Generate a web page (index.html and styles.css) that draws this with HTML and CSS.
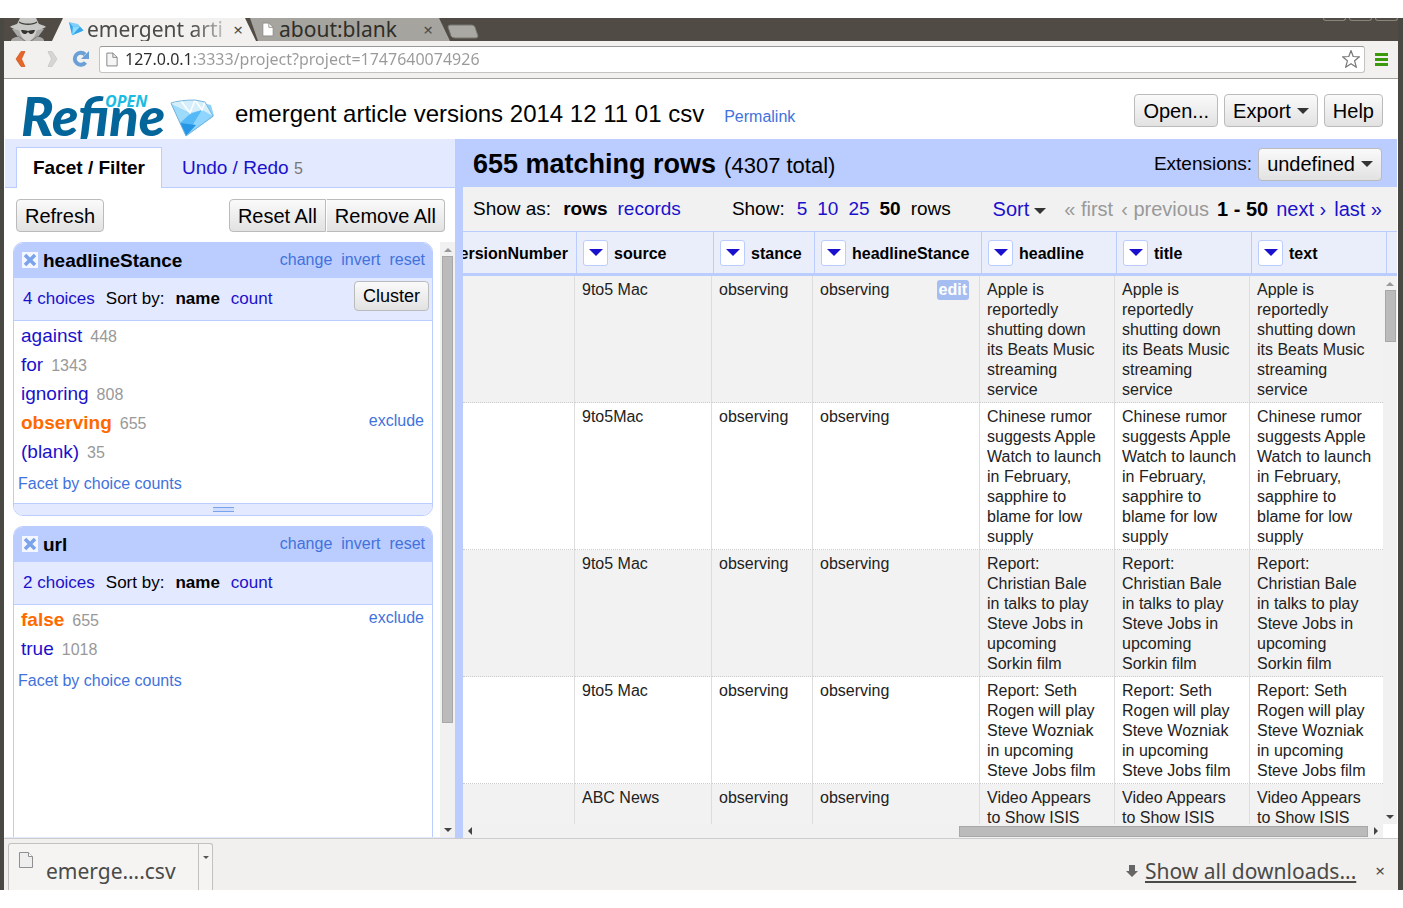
FILE: index.html
```html
<!DOCTYPE html>
<html lang="en">
<head>
<meta charset="utf-8">
<title>emergent article versions 2014 12 11 01 csv - OpenRefine</title>
<link rel="stylesheet" href="styles.css">
</head>
<body>
<div class="window">
  <div class="tabstrip">
    <svg class="incognito" viewBox="0 0 38 23" aria-hidden="true">
      <path d="M2 23c0-2 3-4 7-4l-3-4-3-4h32l-3 4-3 4c4 0 6 2 6 4z" fill="#a9a9a7"/>
      <path d="M10 10c1 8 5 13 9 13s8-5 9-13z" fill="#d0d0ce"/>
      <path d="M1 9c5 3 12 4 18 4s13-1 18-4c-2-2-5-2-7-3l-3-6H11L8 6C6 7 3 7 1 9z" fill="#c8c8c6"/>
      <path d="M10 4c4 3 14 3 18 0" fill="none" stroke="#45433e" stroke-width="1.500"/>
      <path d="M12 12c3 0 5 0 7 1 2-1 4-1 7-1-1 5-5 5-7 2-2 3-6 3-7-2z" fill="#34332f"/>
      <path d="M9 18l7 5M29 18l-7 5" stroke="#7c7b78" stroke-width="1"/>
    </svg>
    <div class="tab tab-active">
      <svg class="tab-gem" viewBox="0 0 44 36" aria-hidden="true"><path d="M2 2L26 3 43 17 16 34z" fill="#7fd0fb"/><path d="M2 2l12 10 18-3 11 8L16 34z" fill="#37a5ea"/><path d="M14 12l18-3-16 25z" fill="#8bdcff"/></svg>
      <span class="tab-title tab-fade">emergent arti</span>
      <button class="x-button" aria-label="Close tab">×</button>
    </div>
    <div class="tab tab-back">
      <svg class="doc-small" viewBox="0 0 14 17" aria-hidden="true"><path d="M1 1h7l5 5v10H1z" fill="#fff" stroke="#8a8984"/><path d="M8 1v5h5" fill="none" stroke="#8a8984"/></svg>
      <span class="tab-title">about:blank</span>
      <button class="x-button" aria-label="Close tab">×</button>
    </div>
    <button class="new-tab" aria-label="New tab"><svg viewBox="0 0 32 15"><path d="M3 1h22q2 0 3 2l3 9q0 2-2 2H8q-3 0-4-2L1 3q0-2 2-2z" fill="#a9a8a3" stroke="#77756f"/></svg></button>
    <div class="window-controls"><i></i><i></i><i></i></div>
  </div>

  <div class="toolbar">
    <button class="nav" aria-label="Back"><svg viewBox="0 0 20 20"><path d="M14 2.500h-4L5 10l5 7.500h4L10.500 10z" fill="#e8662c" stroke="#c95319" stroke-width=".7"/></svg></button>
    <button class="nav nav-forward" aria-label="Forward"><svg viewBox="0 0 20 20"><path d="M7 2.500h4l5 7.500-5 7.500H7l3.500-7.500z" fill="#d6d5d3" stroke="#c4c3c1" stroke-width=".7"/></svg></button>
    <button class="nav" aria-label="Reload"><svg viewBox="0 0 20 20"><path d="M14.500 13.500A6 6 0 1 1 14 5.500" fill="none" stroke="#6b9fd6" stroke-width="4"/><path d="M18 2v8h-8z" fill="#6b9fd6"/></svg></button>
    <div class="address">
      <svg class="doc-small" viewBox="0 0 14 17" aria-hidden="true"><path d="M1 1h7l5 5v10H1z" fill="#f5f5f5" stroke="#777"/><path d="M8 1v5h5" fill="none" stroke="#777"/></svg>
      <input class="address-input" aria-label="Address" value="127.0.0.1:3333/project?project=1747640074926">
      <svg class="star" viewBox="0 0 20 20" aria-hidden="true"><path d="M10 1.500l2.200 6 6.300.3-4.900 4 1.800 6.500L10 14.700l-5.400 3.600 1.800-6.500-4.900-4 6.300-.3z" fill="#fff" stroke="#777" stroke-width="1.200" stroke-linejoin="round"/></svg>
    </div>
    <button class="menu" aria-label="Menu"><i></i><i></i><i></i></button>
  </div>

  <div class="page">
    <header class="header">
      <svg class="logo" viewBox="0 0 196 46" role="img" aria-label="OpenRefine">
        <text x="0" y="43" class="logo-refine">Refine</text>
        <text x="84" y="14" class="logo-open">OPEN</text>
        <path d="M150 11l22-3 18 4 3 11-28 20-6-13z" fill="#8dd2fb"/>
        <path d="M150 11l10-3 14-1 10 2 8 14-11-6-12 3-19-9z" fill="#d5eefc"/>
        <path d="M150 11l19 10-10 9z" fill="#9edafa"/>
        <path d="M159 30l10-9 12-4-16 26z" fill="#55b9f8"/>
        <path d="M181 17l11 7-27 19z" fill="#8fd5ff"/>
        <path d="M159 30l16 2-10 11z" fill="#2595e6"/>
        <path d="M160 8l9 12 5-13 7 10 3-8" fill="none" stroke="#fff" stroke-width="1.500"/>
        <path d="M150 10q9-3 24-3l10 2 8 14-27 20-6-13z" fill="none" stroke="#77b6dd" stroke-width="1"/>
      </svg>
      <h1 class="project-name">emergent article versions 2014 12 11 01 csv</h1>
      <a class="light-link permalink" href="#">Permalink</a>
      <div class="header-actions">
        <button class="button">Open...</button>
        <button class="button">Export<span class="caret"></span></button>
        <button class="button">Help</button>
      </div>
    </header>

    <div class="main">
      <aside class="left">
        <nav class="left-tabs">
          <a class="left-tab left-tab-active" href="#">Facet / Filter</a>
          <a class="left-tab" href="#">Undo / Redo <span class="undo-count">5</span></a>
        </nav>
        <div class="facet-actions">
          <button class="button">Refresh</button>
          <div class="button-pair"><button class="button">Reset All</button><button class="button">Remove All</button></div>
        </div>
        <div class="facet-area">
          <div class="facets">
            <section class="facet">
              <div class="facet-head">
                <button class="facet-close" aria-label="Remove facet"><svg viewBox="0 0 16 16"><path d="M0 0h16v16H0z" fill="#f4f7ff"/><path d="M3 3l10 10M13 3L3 13" stroke="#7ba3ec" stroke-width="3.500"/></svg></button>
                <h2>headlineStance</h2>
                <div class="facet-links"><a class="light-link" href="#">change</a><a class="light-link" href="#">invert</a><a class="light-link" href="#">reset</a></div>
              </div>
              <div class="facet-sort"><a href="#">4 choices</a><span>Sort by:</span><b>name</b><a href="#">count</a><button class="button button-small">Cluster</button></div>
              <div class="facet-body">
                <div class="choice"><a href="#">against</a><span>448</span></div>
                <div class="choice"><a href="#">for</a><span>1343</span></div>
                <div class="choice"><a href="#">ignoring</a><span>808</span></div>
                <div class="choice choice-on"><a href="#">observing</a><span>655</span><a class="light-link exclude" href="#">exclude</a></div>
                <div class="choice"><a href="#">(blank)</a><span>35</span></div>
                <a class="light-link by-counts" href="#">Facet by choice counts</a>
              </div>
              <div class="resizer"><i></i></div>
            </section>
            <section class="facet facet-last">
              <div class="facet-head">
                <button class="facet-close" aria-label="Remove facet"><svg viewBox="0 0 16 16"><path d="M0 0h16v16H0z" fill="#f4f7ff"/><path d="M3 3l10 10M13 3L3 13" stroke="#7ba3ec" stroke-width="3.500"/></svg></button>
                <h2>url</h2>
                <div class="facet-links"><a class="light-link" href="#">change</a><a class="light-link" href="#">invert</a><a class="light-link" href="#">reset</a></div>
              </div>
              <div class="facet-sort"><a href="#">2 choices</a><span>Sort by:</span><b>name</b><a href="#">count</a></div>
              <div class="facet-body">
                <div class="choice choice-on"><a href="#">false</a><span>655</span><a class="light-link exclude" href="#">exclude</a></div>
                <div class="choice"><a href="#">true</a><span>1018</span></div>
                <a class="light-link by-counts" href="#">Facet by choice counts</a>
              </div>
            </section>
          </div>
          <div class="vbar"><i class="arrow-up"></i><div class="thumb facet-thumb"></div><i class="arrow-down"></i></div>
        </div>
      </aside>

      <section class="right">
        <div class="summary">
          <h2>655 matching rows</h2><span class="total">(4307 total)</span>
          <span class="extensions">Extensions:</span><button class="button">undefined<span class="caret"></span></button>
        </div>
        <div class="controls">
          <div class="group"><span class="group-label">Show as:</span><b>rows</b><a href="#">records</a></div>
          <div class="group group-size"><span class="group-label">Show:</span><a href="#">5</a><a href="#">10</a><a href="#">25</a><b>50</b><span>rows</span></div>
          <div class="pager"><a class="sort" href="#">Sort<span class="caret"></span></a><span class="off">« first</span><span class="off">‹ previous</span><b>1 - 50</b><a href="#">next ›</a><a class="last" href="#">last »</a></div>
        </div>
        <table class="grid grid-head">
          <colgroup><col><col class="c-source"><col class="c-stance"><col class="c-hstance"><col class="c-text"><col class="c-text"><col class="c-text"><col class="c-end"></colgroup>
          <tr>
            <th><div class="clipped"><span>articleVersionNumber</span></div></th>
            <th><div class="head"><button class="drop" aria-label="source menu"><i></i></button><span>source</span></div></th>
            <th><div class="head"><button class="drop" aria-label="stance menu"><i></i></button><span>stance</span></div></th>
            <th><div class="head"><button class="drop" aria-label="headlineStance menu"><i></i></button><span>headlineStance</span></div></th>
            <th><div class="head"><button class="drop" aria-label="headline menu"><i></i></button><span>headline</span></div></th>
            <th><div class="head"><button class="drop" aria-label="title menu"><i></i></button><span>title</span></div></th>
            <th><div class="head"><button class="drop" aria-label="text menu"><i></i></button><span>text</span></div></th>
            <td></td>
          </tr>
        </table>
        <div class="data-row">
          <div class="data">
            <table class="grid grid-body">
              <colgroup><col><col class="c-source"><col class="c-stance"><col class="c-hstance"><col class="c-text"><col class="c-text"><col class="c-text-last"></colgroup>
              <tr><td></td><td>9to5 Mac</td><td>observing</td><td><div class="editable">observing<button class="edit">edit</button></div></td><td>Apple is reportedly shutting down its Beats Music streaming service</td><td>Apple is reportedly shutting down its Beats Music streaming service</td><td>Apple is reportedly shutting down its Beats Music streaming service</td></tr>
              <tr><td></td><td>9to5Mac</td><td>observing</td><td>observing</td><td>Chinese rumor suggests Apple Watch to launch in February, sapphire to blame for low supply</td><td>Chinese rumor suggests Apple Watch to launch in February, sapphire to blame for low supply</td><td>Chinese rumor suggests Apple Watch to launch in February, sapphire to blame for low supply</td></tr>
              <tr><td></td><td>9to5 Mac</td><td>observing</td><td>observing</td><td>Report: Christian Bale in talks to play Steve Jobs in upcoming Sorkin film</td><td>Report: Christian Bale in talks to play Steve Jobs in upcoming Sorkin film</td><td>Report: Christian Bale in talks to play Steve Jobs in upcoming Sorkin film</td></tr>
              <tr><td></td><td>9to5 Mac</td><td>observing</td><td>observing</td><td>Report: Seth Rogen will play Steve Wozniak in upcoming Steve Jobs film</td><td>Report: Seth Rogen will play Steve Wozniak in upcoming Steve Jobs film</td><td>Report: Seth Rogen will play Steve Wozniak in upcoming Steve Jobs film</td></tr>
              <tr><td></td><td>ABC News</td><td>observing</td><td>observing</td><td>Video Appears to Show ISIS</td><td>Video Appears to Show ISIS</td><td>Video Appears to Show ISIS</td></tr>
            </table>
          </div>
          <div class="vbar"><i class="arrow-up"></i><div class="thumb data-thumb"></div><i class="arrow-down"></i></div>
        </div>
        <div class="hbar"><i class="arrow-left"></i><div class="htrack"><div class="hthumb"></div></div><i class="arrow-right"></i></div>
      </section>
    </div>
  </div>

  <footer class="downloads">
    <div class="download">
      <button class="download-file"><svg class="download-icon" viewBox="0 0 14 16" aria-hidden="true"><path d="M.5.500h9l4 4v11H.5z" fill="#eee" stroke="#8f8f8f"/><path d="M9.500.500v4h4" fill="#fff" stroke="#8f8f8f"/></svg><span>emerge….csv</span></button>
      <button class="download-menu" aria-label="Download options"><i></i></button>
    </div>
    <svg class="down-icon" viewBox="0 0 12 12" aria-hidden="true"><path d="M3 0h6v6h3l-6 6-6-6h3z" fill="#666"/></svg>
    <a class="show-all" href="#">Show all downloads...</a>
    <button class="x-button x-downloads" aria-label="Close downloads bar">×</button>
  </footer>
</div>
</body>
</html>
```

FILE: styles.css
```css
* { box-sizing: border-box; }

body {
  margin: 0;
  padding: 18px 0;
  height: 100vh;
  background: #fff;
  color: #000;
  font: 16px/20px "Liberation Sans", Arial, sans-serif;
}

button { font: inherit; color: inherit; cursor: pointer; }
a { color: #1a11cc; text-decoration: none; }
h1, h2 { margin: 0; }
i { display: block; }
svg { display: block; }

.window {
  display: flex;
  flex-direction: column;
  height: 100%;
  overflow: hidden;
  background: #504c45;
  border: solid #4a4842;
  border-width: 0 5px 0 4px;
}

/* Browser chrome */
.tabstrip {
  display: flex;
  flex: none;
  height: 23px;
  padding-left: 5px;
  color: #4a4a48;
  font-family: "Noto Sans", "Open Sans", sans-serif;
}
.incognito { width: 38px; height: 23px; }
.tab {
  display: flex;
  align-items: center;
  height: 23px;
  clip-path: polygon(11px 0, calc(100% - 11px) 0, 100% 100%, 0 100%);
}
.tab-active { z-index: 1; width: 204px; margin-left: 5px; padding: 0 10px 0 15px; gap: 3px; background: #f2f1f0; }
.tab-back {
  width: 200px;
  margin-left: -6px;
  padding: 0 14px 0 12px;
  gap: 5px;
  background: #a5a49f;
  color: #2f2e28;
  clip-path: polygon(0 0, calc(100% - 11px) 0, 100% 100%, 8px 100%);
}
.tab-gem { flex: none; width: 17px; height: 17px; transform: rotate(10deg); }
.tab-title { flex: 1; font-size: 21px; line-height: 23px; white-space: nowrap; }
.tab-fade { mask-image: linear-gradient(to right, #000 75%, rgb(0 0 0 / 20%)); }
.doc-small { flex: none; width: 12px; height: 15px; }
.x-button { padding: 0 3px; border: 0; background: none; font: 17px/20px "Noto Sans", sans-serif; color: #4a4a48; }
.new-tab { width: 32px; height: 23px; margin-left: -3px; padding: 3px 0 0; border: 0; background: none; }
.new-tab svg { width: 32px; height: 15px; }
.window-controls { display: flex; gap: 3px; margin-left: auto; }
.window-controls i { width: 23px; height: 3px; border: 1px solid #88857c; border-top: 0; border-radius: 0 0 3px 3px; }

.toolbar {
  display: flex;
  flex: none;
  align-items: center;
  gap: 10px;
  height: 38px;
  padding: 0 10px 1px 7px;
  background: #f2f1f0;
  border-bottom: 1px solid #a3a29f;
}
.nav { width: 20px; height: 20px; padding: 0; border: 0; background: none; }
.nav svg { width: 20px; height: 20px; }
.address {
  display: flex;
  flex: 1;
  align-items: center;
  gap: 7px;
  height: 27px;
  margin-left: -2px;
  padding: 0 3px 0 6px;
  background: #fff;
  border: 1px solid #c4c3c1;
  border-top-color: #999;
  border-radius: 3px;
}
.address-input {
  flex: 1;
  min-width: 0;
  padding: 0;
  border: 0;
  outline: 0;
  font: 16px/24px "Noto Sans", "Open Sans", sans-serif;
  color: transparent;
  background: linear-gradient(to right, #2a2a2a 67px, #999 67px) text;
}
.star { flex: none; width: 20px; height: 20px; }
.menu { display: grid; gap: 2px; width: 13px; padding: 0; border: 0; background: none; }
.menu i { height: 3px; background: #3a9a0c; }

/* Page frame */
.page { display: flex; flex: 1; flex-direction: column; min-height: 0; padding: 0 1px; background: #fff; }
.header { display: flex; flex: none; align-items: center; height: 60px; padding: 3px 14px 0 16px; }
.logo { flex: none; align-self: flex-end; width: 196px; height: 46px; margin-right: 18px; overflow: visible; }
.logo-refine { font: italic 900 54px "Lato", sans-serif; fill: #04659a; }
.logo-open { font: italic 700 16px "Noto Sans", sans-serif; fill: #1bbce2; }
.project-name { margin-top: 6px; font-size: 24px; font-weight: 400; line-height: 28px; white-space: nowrap; }
.permalink { margin: 12px 0 0 20px; }
.light-link { color: #4272db; }
.header-actions { display: flex; gap: 6px; margin-left: auto; }

.button {
  display: inline-flex;
  align-items: center;
  height: 33px;
  padding: 0 8px;
  color: #000;
  font-size: 20px;
  line-height: 24px;
  white-space: nowrap;
  background: linear-gradient(#fafafa, #e2e2e2);
  border: 1px solid #bbb;
  border-radius: 4px;
}
.button-small { height: 30px; font-size: 18px; }
.button-pair { display: flex; }
.button-pair .button:first-child { border-radius: 4px 0 0 4px; }
.button-pair .button:last-child { border-left-color: #fff; border-radius: 0 4px 4px 0; }
.caret { display: inline-block; margin-left: 6px; border: 6px solid transparent; border-top-color: #333; border-bottom: 0; }

.main { display: flex; flex: 1; min-height: 0; }

/* Facet column */
.left { display: flex; flex: none; flex-direction: column; width: 450px; border-bottom: 1px solid #e3e9ff; }
.left-tabs {
  display: flex;
  flex: none;
  align-items: flex-end;
  gap: 4px;
  height: 49px;
  padding-left: 11px;
  background: #e3e9ff;
  border-bottom: 1px solid #bbccff;
}
.left-tab { height: 39px; padding: 0 16px; font-size: 19px; line-height: 40px; }
.left-tab-active { height: 41px; margin-bottom: -1px; color: #000; font-weight: 700; background: #fff; border: 1px solid #bbccff; border-bottom: 0; }
.undo-count { color: #777; font-size: 16px; }
.facet-actions { display: flex; flex: none; justify-content: space-between; padding: 11px 10px 10px 11px; }
.facet-area { display: flex; flex: 1; min-height: 0; padding-left: 8px; }
.facets { display: flex; flex: 1; flex-direction: column; gap: 10px; overflow: hidden; padding-right: 7px; }
.facet { flex: none; border: 1px solid #bbccff; border-radius: 10px; overflow: hidden; }
.facet-last { flex: 1 0 auto; border-bottom: 0; border-radius: 10px 10px 0 0; }
.facet-head { display: flex; align-items: center; height: 35px; padding: 0 7px 2px 8px; background: #bbccff; }
.facet-head h2 { margin: 3px 0 0 5px; font-size: 19px; line-height: 24px; }
.facet-close { width: 16px; height: 16px; padding: 0; border: 0; background: none; }
.facet-close svg { width: 16px; height: 16px; }
.facet-links { display: flex; gap: 9px; margin-left: auto; }
.facet-sort {
  display: flex;
  align-items: center;
  gap: 11px;
  height: 43px;
  padding: 0 3px 0 9px;
  font-size: 17px;
  background: #e3e9ff;
  border-bottom: 1px solid #bbccff;
}
.facet-sort .button { margin: 0 0 6px auto; }
.facet-body { padding: 0 8px 6px 4px; }
.choice { display: flex; align-items: center; gap: 8px; height: 29px; padding-left: 3px; font-size: 19px; }
.choice span { margin-top: 2px; color: #999; font-size: 16px; }
.choice-on a:first-child { color: #ff6a00; font-weight: 700; }
.choice .exclude { margin: 0 0 3px auto; font-size: 16px; }
.by-counts { display: block; margin-top: 5px; line-height: 26px; }
.resizer { display: grid; place-items: center; height: 12px; background: #e3e9ff; border-top: 1px solid #bbccff; }
.resizer i { width: 21px; height: 5px; border: solid #7ba3ec; border-width: 1px 0; background: #cddcff; }

/* Scroll bars */
.vbar { display: flex; flex: none; flex-direction: column; align-items: center; width: 15px; padding: 6px 0 5px; background: #f1f1f1; }
.thumb { width: 11px; margin-top: 4px; background: #bbb; border: 1px solid #a8a8a8; }
.facet-thumb { height: 80%; }
.data-thumb { height: 52px; }
.arrow-up { border: 4px solid transparent; border-top: 0; border-bottom-color: #999; }
.arrow-down { margin-top: auto; border: 4px solid transparent; border-bottom: 0; border-top-color: #444; }
.hbar { display: flex; flex: none; align-items: center; height: 14px; margin-right: 14px; padding: 0 5px; background: #f1f1f1; }
.htrack { flex: 1; margin: 0 6px; }
.hthumb { width: 46%; height: 11px; margin-left: auto; background: #bbb; border: 1px solid #a8a8a8; }
.arrow-left { border: 4px solid transparent; border-left: 0; border-right-color: #444; }
.arrow-right { border: 4px solid transparent; border-right: 0; border-left-color: #444; }

/* Data column */
.right { display: flex; flex: 1; flex-direction: column; min-width: 0; border-left: 8px solid #bbccff; }
.summary { display: flex; flex: none; align-items: center; height: 48px; padding: 2px 15px 0 10px; background: #bbccff; white-space: nowrap; }
.summary h2 { font-size: 27px; line-height: 32px; }
.total { margin: 4px 0 0 8px; font-size: 22px; }
.extensions { margin: 0 6px 0 auto; font-size: 19px; }
.controls { display: flex; flex: none; align-items: center; gap: 20px; height: 44px; padding: 0 15px 0 10px; font-size: 19px; background: #f1f1f1; white-space: nowrap; }
.group, .pager { display: flex; align-items: center; gap: 10px; }
.group-size { margin-left: 31px; }
.group-label { margin-right: 2px; }
.pager { gap: 8px; margin-left: auto; font-size: 20px; }
.sort { margin-right: 10px; }
.sort .caret { margin-left: 5px; vertical-align: middle; }
.off { color: #999; }

.grid { width: 100%; table-layout: fixed; border-collapse: separate; border-spacing: 0; }
.c-source { width: 137px; }
.c-stance { width: 101px; }
.c-hstance { width: 167px; }
.c-text { width: 135px; }
.c-text-last { width: 133px; }
.c-end { width: 10px; }
.grid-head { flex: none; border-top: 1px solid #bbccff; border-bottom: 3px solid #bbccff; background: #eaedfa; }
.grid-head th { height: 41px; padding: 0; border-right: 1px solid #bbccff; }
.head { display: flex; align-items: center; gap: 6px; padding-left: 6px; white-space: nowrap; }
.head span, .clipped span { padding-top: 2px; }
.clipped { display: flex; justify-content: flex-end; overflow: hidden; padding-right: 8px; }
.drop { display: grid; place-items: center; width: 25px; height: 26px; padding: 0; background: #fff; border: 1px solid #bbccff; border-radius: 3px; }
.drop i { border: 7px solid transparent; border-top-color: #1a11cc; border-bottom: 0; }
.data-row { display: flex; flex: 1; min-height: 0; }
.data { flex: 1; min-width: 0; overflow: hidden; }
.data-row .vbar { width: 14px; }
.grid-body td { padding: 4px 10px 2px 7px; color: #222; vertical-align: top; border-right: 1px solid #ddd; border-bottom: 1px dotted #ccc; }
.grid-body td:nth-child(n+5) { padding-right: 12px; }
.grid-body td:last-child { padding-right: 11px; border-right: 0; }
.grid-body tr:nth-child(odd) { background: #f2f2f2; }
.editable { display: flex; justify-content: space-between; }
.edit { height: 20px; padding: 0 2px; border: 0; border-radius: 3px; background: #a5bdf0; color: #fff; font-weight: 700; line-height: 20px; }

/* Downloads bar */
.downloads { display: flex; flex: none; align-items: center; height: 52px; padding: 0 10px 0 4px; background: #f1f0ee; border-top: 1px solid #ccc; color: #4a4a48; font: 21px/28px "Noto Sans", "Open Sans", sans-serif; }
.download { display: flex; align-self: stretch; margin: 4px auto 0 0; border: 1px solid #c2c1bf; border-bottom: 0; border-radius: 3px 3px 0 0; background: #f5f4f3; }
.download-file { display: flex; gap: 13px; padding: 8px 22px 0 10px; border: 0; background: none; }
.download-file span { padding-top: 5px; }
.download-icon { width: 14px; height: 16px; }
.download-menu { width: 14px; padding: 0 4px 20px; border: 0; border-left: 1px solid #c2c1bf; background: none; }
.download-menu i { border: 3px solid transparent; border-top-color: #555; border-bottom: 0; }
.down-icon { width: 12px; height: 12px; margin: 12px 7px 0 0; }
.show-all { margin: 12px 16px 0 0; color: inherit; text-decoration: underline; }
.x-downloads { margin-top: 12px; }
```
